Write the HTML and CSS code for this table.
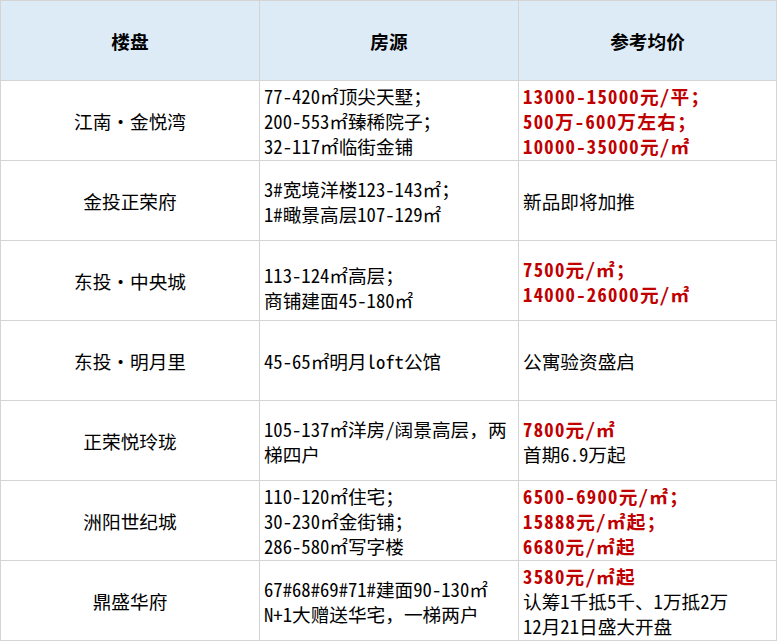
FILE: index.html
```html
<!DOCTYPE html>
<html lang="zh-CN">
<head>
<meta charset="utf-8">
<title>楼盘</title>
<link rel="stylesheet" href="styles.css">
</head>
<body>
<div class="table">
  <div class="cell head"><div>楼盘</div></div>
  <div class="cell head"><div>房源</div></div>
  <div class="cell head"><div>参考均价</div></div>

  <div class="cell name"><div>江南・金悦湾</div></div>
  <div class="cell info"><div>77-420㎡顶尖天墅；<br>200-553㎡臻稀院子；<br>32-117㎡临街金铺</div></div>
  <div class="cell info"><div class="red">13000-15000元/平；<br>500万-600万左右；<br>10000-35000元/㎡</div></div>

  <div class="cell name"><div>金投正荣府</div></div>
  <div class="cell info"><div>3#宽境洋楼123-143㎡；<br>1#瞰景高层107-129㎡</div></div>
  <div class="cell info"><div>新品即将加推</div></div>

  <div class="cell name"><div>东投・中央城</div></div>
  <div class="cell info low"><div>113-124㎡高层；<br>商铺建面45-180㎡</div></div>
  <div class="cell info"><div class="red">7500元/㎡；<br>14000-26000元/㎡</div></div>

  <div class="cell name"><div>东投・明月里</div></div>
  <div class="cell info"><div>45-65㎡明月loft公馆</div></div>
  <div class="cell info"><div>公寓验资盛启</div></div>

  <div class="cell name"><div>正荣悦玲珑</div></div>
  <div class="cell info"><div>105-137㎡洋房/阔景高层，两<br>梯四户</div></div>
  <div class="cell info"><div><span class="red">7800元/㎡</span><br>首期6.9万起</div></div>

  <div class="cell name"><div>洲阳世纪城</div></div>
  <div class="cell info"><div>110-120㎡住宅；<br>30-230㎡金街铺；<br>286-580㎡写字楼</div></div>
  <div class="cell info"><div class="red">6500-6900元/㎡；<br>15888元/㎡起；<br>6680元/㎡起</div></div>

  <div class="cell name"><div>鼎盛华府</div></div>
  <div class="cell info"><div>67#68#69#71#建面90-130㎡<br>N+1大赠送华宅，一梯两户</div></div>
  <div class="cell info"><div><span class="red">3580元/㎡起</span><br>认筹1千抵5千、1万抵2万<br>12月21日盛大开盘</div></div>
</div>
</body>
</html>
```

FILE: styles.css
```css
html, body {
  margin: 0;
  padding: 0;
  background: #ffffff;
}

.table {
  display: grid;
  grid-template-columns: 258px 258px 257px;
  grid-template-rows: repeat(8, 79px);
  gap: 1px;
  padding: 1px;
  width: 775px;
  background: #d4d4d4;
  font-family: "Noto Sans Mono CJK SC", "Noto Sans CJK SC", sans-serif;
  font-size: 18.67px;
  line-height: 25px;
  color: #000000;
}

.cell {
  background: #ffffff;
  display: flex;
  flex-direction: column;
  justify-content: center;
  padding-top: 0;
  box-sizing: border-box;
  white-space: nowrap;
}

.head {
  background: #ddebf7;
  font-weight: bold;
  text-align: center;
}

.name {
  text-align: center;
}

.info {
  text-align: left;
  padding-left: 4px;
}

.low {
  padding-top: 12px;
}

.red {
  color: #c00000;
  font-weight: bold;
  letter-spacing: 1.3px;
}
```
